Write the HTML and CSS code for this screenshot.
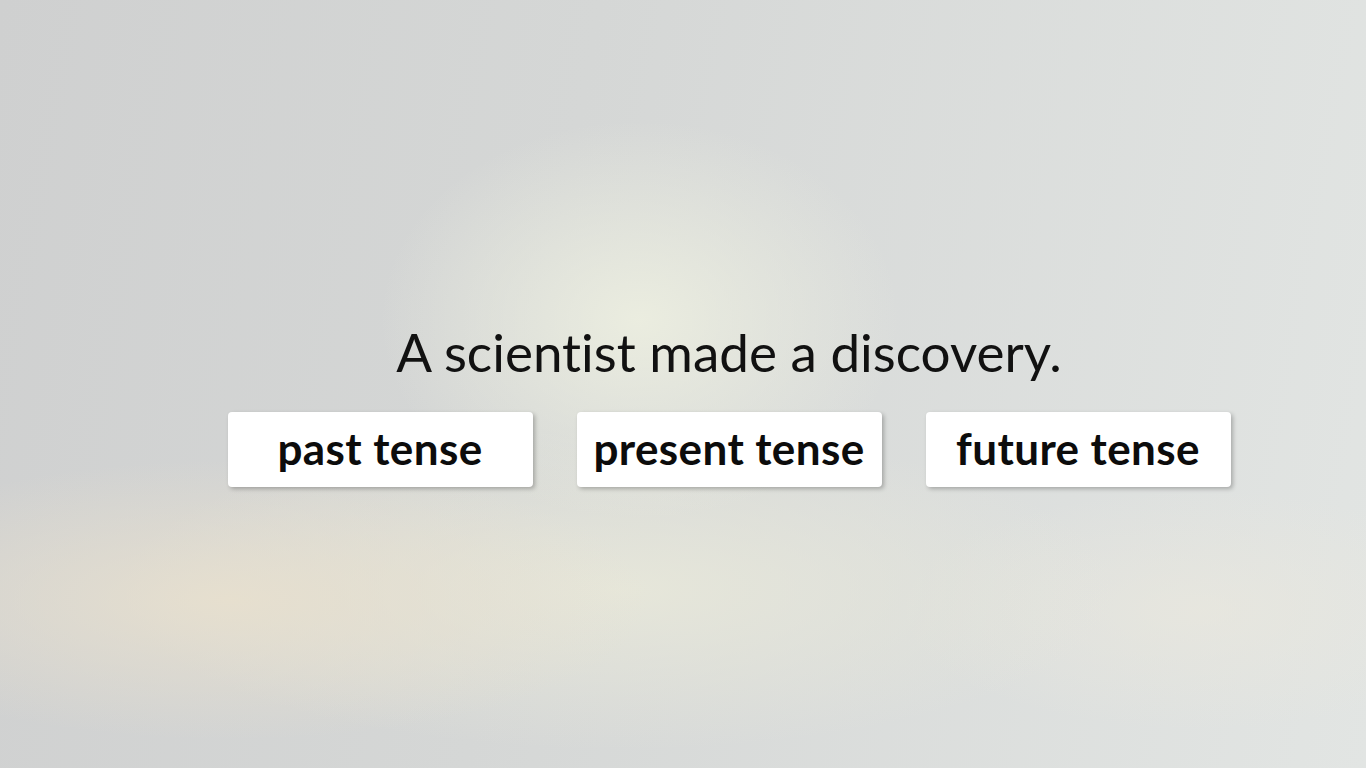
FILE: index.html
```html
<!DOCTYPE html>
<html lang="en">
<head>
<meta charset="utf-8">
<title>Tense</title>
<link rel="stylesheet" href="styles.css">
</head>
<body>
<main class="stage">
  <section class="question">
    <p class="sentence">A scientist made a discovery.</p>
    <div class="choices">
      <button class="choice">past tense</button>
      <button class="choice">present tense</button>
      <button class="choice">future tense</button>
    </div>
  </section>
</main>
</body>
</html>
```
FILE: styles.css
```css
html, body {
  margin: 0;
  padding: 0;
  height: 100%;
}
body {
  font-family: "Lato", "Open Sans", sans-serif;
  font-variant-ligatures: none;
  color: #111;
  background-color: #d9dbda;
  background-image:
    radial-gradient(ellipse 260px 200px at 640px 320px, rgba(236, 238, 224, 0.95), rgba(236, 238, 224, 0) 100%),
    radial-gradient(ellipse 420px 140px at 230px 600px, rgba(232, 224, 206, 0.9), rgba(232, 224, 206, 0) 100%),
    radial-gradient(ellipse 500px 160px at 620px 590px, rgba(232, 232, 218, 0.9), rgba(232, 232, 218, 0) 100%),
    radial-gradient(ellipse 300px 120px at 1200px 610px, rgba(234, 232, 222, 0.7), rgba(234, 232, 222, 0) 100%),
    linear-gradient(100deg, #cfd0d0 0%, #d5d7d6 40%, #e2e5e3 100%);
  overflow: hidden;
}
.stage {
  height: 100%;
  display: flex;
  justify-content: center;
  padding-left: 92px;
  box-sizing: border-box;
}
.question {
  padding-top: 320px;
  display: flex;
  flex-direction: column;
  align-items: center;
}
.sentence {
  margin: 0;
  font-size: 53px;
  font-weight: 400;
  line-height: 64px;
  color: #111;
}
.choices {
  margin-top: 28px;
  display: flex;
  gap: 44px;
}
.choice {
  width: 305px;
  height: 75px;
  border: none;
  border-radius: 4px;
  background: #fff;
  box-shadow: 2px 2px 4px rgba(0, 0, 0, 0.25);
  font-family: "Lato", "Open Sans", sans-serif;
  font-variant-ligatures: none;
  font-weight: 700;
  font-size: 44px;
  letter-spacing: 0.4px;
  color: #0c0c0c;
  padding: 0 0 4px;
  cursor: pointer;
}
```
